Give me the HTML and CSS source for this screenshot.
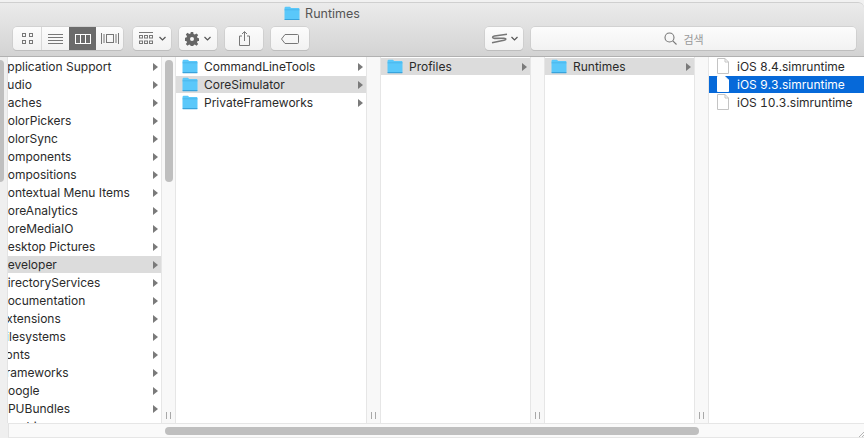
FILE: index.html
```html
<!DOCTYPE html>
<html lang="en">
<head>
  <meta charset="UTF-8">
  <meta name="viewport" content="width=device-width, initial-scale=1.0">
  <title>Runtimes</title>
  <link rel="stylesheet" href="styles.css">
</head>
<body>

<svg class="defs" width="0" height="0">
  <symbol id="folder" viewBox="0 0 16 14">
    <path d="M.5 2.2C.5 1.2 1 .7 2 .7h3.4c.7 0 1 .3 1.4 1 .2.3.4.4.8.4h6.6c.9 0 1.3.4 1.3 1.3v9c0 .9-.4 1.3-1.3 1.3H1.800c-.9 0-1.300-.4-1.300-1.300z" fill="#5ac8fa"/>
    <path d="M.5 3.800h15" stroke="#3fa9e0" stroke-width=".6" fill="none"/>
    <path d="M.5 13h15v.4c0 .5-.4.9-.9.9H1.400c-.5 0-.9-.4-.9-.9z" fill="#38a3dc"/>
  </symbol>
  <symbol id="doc" viewBox="0 0 14 16">
    <path class="doc-line" d="M1.500.5h7.500l3.500 3.500v11.500h-11z" fill="#fff"/>
    <path class="doc-line" d="M9 .5v3.500h3.500" fill="none"/>
  </symbol>
</svg>

<div class="window">
  <div class="toolbar">
    <div class="title">
      <svg class="title-icon"><use href="#folder"/></svg>
      <span>Runtimes</span>
    </div>
    <div class="tools">
      <div class="btn-group">
        <div class="seg seg-icons">
          <svg width="11" height="11" viewBox="0 0 11 11" fill="none" stroke="#777"><rect x=".5" y=".5" width="3" height="3"/><rect x="7.500" y=".5" width="3" height="3"/><rect x=".5" y="7.500" width="3" height="3"/><rect x="7.500" y="7.500" width="3" height="3"/></svg>
        </div>
        <div class="seg seg-list">
          <svg width="15" height="10" viewBox="0 0 15 10" stroke="#777"><path d="M0 .5h15M0 3.500h15M0 6.500h15M0 9.500h15"/></svg>
        </div>
        <div class="seg seg-columns">
          <svg width="16" height="10" viewBox="0 0 16 10" fill="none" stroke="#fff"><rect x=".5" y=".5" width="15" height="9"/><path d="M5.500 0v10M10.500 0v10"/></svg>
        </div>
        <div class="seg seg-flow">
          <svg width="18" height="11" viewBox="0 0 18 11" fill="none" stroke="#777"><rect x="5.500" y="1.500" width="7" height="8"/><path d="M.5 0v11M3 1v9M15 1v9M17.500 0v11"/></svg>
        </div>
      </div>
      <div class="btn btn-arrange">
        <svg width="15" height="13" viewBox="0 0 15 13" fill="none" stroke="#777"><path d="M0 .5h14"/><rect x=".5" y="3.500" width="3" height="2.500"/><rect x="5.500" y="3.500" width="3" height="2.500"/><rect x="10.500" y="3.500" width="3" height="2.500"/><rect x=".5" y="9" width="3" height="2.500"/><rect x="5.500" y="9" width="3" height="2.500"/><rect x="10.500" y="9" width="3" height="2.500"/></svg>
        <svg class="chev" width="7" height="5" viewBox="0 0 7 5"><path d="M.5 1l3 3 3-3" fill="none" stroke="#555" stroke-width="1.200"/></svg>
      </div>
      <div class="btn btn-action">
        <svg width="14" height="14" viewBox="0 0 14 14"><path d="M5.800 0h2.400l.3 2 1.300.6 1.700-1.200 1.700 1.700-1.200 1.700.6 1.300 2 .3v2.400l-2 .3-.6 1.300 1.200 1.700-1.700 1.700-1.700-1.200-1.300.6-.3 2H5.800l-.3-2-1.300-.6-1.700 1.200-1.700-1.700 1.200-1.700-.6-1.300-2-.3V5.800l2-.3.6-1.300-1.200-1.700 1.700-1.700 1.700 1.200 1.300-.6zM7 5a2 2 0 100 4 2 2 0 000-4z" fill="#666" fill-rule="evenodd"/></svg>
        <svg class="chev" width="7" height="5" viewBox="0 0 7 5"><path d="M.5 1l3 3 3-3" fill="none" stroke="#555" stroke-width="1.200"/></svg>
      </div>
      <div class="btn btn-share">
        <svg width="11" height="15" viewBox="0 0 11 15" fill="none" stroke="#777"><path d="M3 5H.5v9.500h10V5H8M5.500 10V.8M3 3L5.500 .6 8 3"/></svg>
      </div>
      <div class="btn btn-tag">
        <svg width="18" height="10" viewBox="0 0 18 10" fill="none" stroke="#777"><path d="M4 .5h12.500c.6 0 1 .4 1 1v7c0 .6-.4 1-1 1H4L.5 5z"/></svg>
      </div>
      <div class="btn btn-dropbox">
        <svg width="17" height="11" viewBox="0 0 17 11" fill="none" stroke="#777" stroke-width="1.600"><path d="M16 1.200L3.500 3C1 3.500 1 5.300 3.500 5.400L13 5.200C15.500 5.200 15.500 6.800 13 7.300L1 9.800"/></svg>
        <svg class="chev" width="7" height="5" viewBox="0 0 7 5"><path d="M.5 1l3 3 3-3" fill="none" stroke="#555" stroke-width="1.200"/></svg>
      </div>
      <div class="search">
        <svg width="13" height="13" viewBox="0 0 13 13" fill="none" stroke="#777" stroke-width="1.100"><circle cx="5.500" cy="5.500" r="4.500"/><path d="M8.800 8.800L12.500 12.500"/></svg>
        <span>검색</span>
      </div>
    </div>
  </div>

  <div class="browser">
    <div class="columns">
      <div class="edge"><div class="thumb-edge"></div></div>

      <div class="col col-lib">
        <div class="row"><span class="name">Application Support</span><i class="arrow"></i></div>
        <div class="row"><span class="name">Audio</span><i class="arrow"></i></div>
        <div class="row"><span class="name">Caches</span><i class="arrow"></i></div>
        <div class="row"><span class="name">ColorPickers</span><i class="arrow"></i></div>
        <div class="row"><span class="name">ColorSync</span><i class="arrow"></i></div>
        <div class="row"><span class="name">Components</span><i class="arrow"></i></div>
        <div class="row"><span class="name">Compositions</span><i class="arrow"></i></div>
        <div class="row"><span class="name">Contextual Menu Items</span><i class="arrow"></i></div>
        <div class="row"><span class="name">CoreAnalytics</span><i class="arrow"></i></div>
        <div class="row"><span class="name">CoreMediaIO</span><i class="arrow"></i></div>
        <div class="row"><span class="name">Desktop Pictures</span><i class="arrow"></i></div>
        <div class="row active"><span class="name">Developer</span><i class="arrow"></i></div>
        <div class="row"><span class="name">DirectoryServices</span><i class="arrow"></i></div>
        <div class="row"><span class="name">Documentation</span><i class="arrow"></i></div>
        <div class="row"><span class="name">Extensions</span><i class="arrow"></i></div>
        <div class="row"><span class="name">Filesystems</span><i class="arrow"></i></div>
        <div class="row"><span class="name">Fonts</span><i class="arrow"></i></div>
        <div class="row"><span class="name">Frameworks</span><i class="arrow"></i></div>
        <div class="row"><span class="name">Google</span><i class="arrow"></i></div>
        <div class="row"><span class="name">GPUBundles</span><i class="arrow"></i></div>
        <div class="row"><span class="name">Graphics</span><i class="arrow"></i></div>
      </div>
      <div class="divider"><div class="thumb"></div><span class="grip"></span></div>

      <div class="col col-dev">
        <div class="row"><svg class="icon"><use href="#folder"/></svg><span>CommandLineTools</span><i class="arrow"></i></div>
        <div class="row active"><svg class="icon"><use href="#folder"/></svg><span>CoreSimulator</span><i class="arrow"></i></div>
        <div class="row"><svg class="icon"><use href="#folder"/></svg><span>PrivateFrameworks</span><i class="arrow"></i></div>
      </div>
      <div class="divider"><span class="grip"></span></div>

      <div class="col col-mid">
        <div class="row active"><svg class="icon"><use href="#folder"/></svg><span>Profiles</span><i class="arrow"></i></div>
      </div>
      <div class="divider"><span class="grip"></span></div>

      <div class="col col-mid">
        <div class="row active"><svg class="icon"><use href="#folder"/></svg><span>Runtimes</span><i class="arrow"></i></div>
      </div>
      <div class="divider"><span class="grip"></span></div>

      <div class="col col-files">
        <div class="row"><svg class="icon"><use href="#doc"/></svg><span>iOS 8.4.simruntime</span></div>
        <div class="row selected"><svg class="icon"><use href="#doc"/></svg><span>iOS 9.3.simruntime</span></div>
        <div class="row"><svg class="icon"><use href="#doc"/></svg><span>iOS 10.3.simruntime</span></div>
      </div>
    </div>

    <div class="hscroll">
      <div class="hthumb"></div>
      <svg class="corner" width="5" height="5" viewBox="0 0 5 5" stroke="#b5b5b5"><path d="M0 5L5 0M3 5L5 3"/></svg>
    </div>
  </div>
</div>

</body>
</html>
```

FILE: styles.css
```css
html, body {
  margin: 0;
  padding: 0;
  height: 100%;
  overflow: hidden;
}
body {
  font-family: 'Inter', 'Noto Sans CJK KR', sans-serif;
  font-size: 12px;
  color: #2a2a2a;
  background-color: #f1f1f1;
}
.defs {
  display: block;
  height: 0;
}
.window {
  display: flex;
  flex-direction: column;
  height: 438px;
}

/* toolbar */
.toolbar {
  height: 55px;
  margin-top: 2px;
  box-sizing: border-box;
  border-top: 1px solid #cfcfcf;
  border-bottom: 1px solid #b1b1b1;
  border-radius: 0 6px 0 0;
  background: linear-gradient(#ebebeb, #d3d3d3);
}
.title {
  display: flex;
  align-items: center;
  justify-content: center;
  gap: 5px;
  height: 20px;
  padding-right: 220px;
  font-size: 12.5px;
  color: #555;
}
.title-icon {
  width: 16px;
  height: 14px;
}
.tools {
  display: flex;
  align-items: center;
  padding: 4px 8px 0 13px;
}
.btn-group, .btn, .search {
  display: flex;
  align-items: center;
  justify-content: center;
  height: 23px;
  box-sizing: border-box;
  background: linear-gradient(#fcfcfc, #f2f2f2);
  border-radius: 4px;
  box-shadow: 0 0 0 .5px #c4c4c4, 0 1px 0 #b8b8b8;
}
.btn-group {
  width: 110px;
  overflow: hidden;
}
.seg {
  display: flex;
  align-items: center;
  justify-content: center;
  height: 100%;
}
.seg-icons {
  width: 28px;
  border-right: 1px solid #d8d8d8;
}
.seg-list {
  width: 27px;
}
.seg-columns {
  width: 27px;
  background-color: #6b6b6b;
}
.seg-flow {
  width: 27px;
}
.btn {
  gap: 5px;
  width: 38px;
  margin-left: 8px;
}
.btn-arrange {
  margin-left: 10px;
}
.btn-dropbox {
  gap: 3px;
  margin-left: 176px;
}
.search {
  flex: 1;
  gap: 6px;
  margin-left: 8px;
  padding-right: 19px;
  color: #999;
  font-size: 11px;
}

/* columns */
.browser {
  flex: 1;
  display: flex;
  flex-direction: column;
  min-height: 0;
  background-color: #efefef;
}
.columns {
  flex: 1;
  display: flex;
  min-height: 0;
  overflow: hidden;
  background-color: #fff;
}
.edge {
  flex: none;
  width: 8px;
  box-sizing: border-box;
  background-color: #efefef;
  border-right: 1px solid #e3e3e3;
  padding-top: 3px;
}
.thumb-edge {
  width: 4px;
  height: 122px;
  background-color: #bfbfbf;
  border-radius: 0 4px 4px 0;
}
.col {
  flex: none;
  padding-top: 1px;
  overflow: hidden;
}
.col-lib {
  width: 153px;
}
.col-dev {
  width: 190px;
}
.col-mid {
  width: 149px;
}
.col-files {
  flex: 1;
  font-variant-numeric: tabular-nums;
}
.divider {
  position: relative;
  flex: none;
  width: 15px;
  box-sizing: border-box;
  background-color: #f8f8f8;
  border-left: 1px solid #e6e6e6;
  border-right: 1px solid #e6e6e6;
}
.thumb {
  position: absolute;
  top: 3px;
  left: 3px;
  width: 8px;
  height: 122px;
  background-color: #bfbfbf;
  border-radius: 4px;
}
.grip {
  position: absolute;
  bottom: 4px;
  left: 4px;
  width: 5px;
  height: 7px;
  box-sizing: border-box;
  border-left: 1px solid #a8a8a8;
  border-right: 1px solid #a8a8a8;
}
.row {
  display: flex;
  align-items: center;
  height: 17px;
  margin-bottom: 1px;
  padding-left: 6px;
  white-space: nowrap;
}
.col-lib .row {
  padding-left: 0;
}
.col-lib .name {
  margin-left: -9px;
}
.row span {
  flex: 1;
  min-width: 0;
}
.icon {
  flex: none;
  width: 16px;
  height: 16px;
  margin-right: 6px;
  margin-bottom: 1px;
}
.doc-line {
  stroke: var(--doc-line, #c4c4c4);
}
.arrow {
  flex: none;
  width: 0;
  height: 0;
  margin-right: 3px;
  border-left: 5px solid #7a7a7a;
  border-top: 4px solid transparent;
  border-bottom: 4px solid transparent;
}
.active {
  background-color: #dcdcdc;
}
.selected {
  --doc-line: #fff;
  background-color: #0669d9;
  color: #fff;
}

/* bottom scroller */
.hscroll {
  position: relative;
  flex: none;
  height: 15px;
  box-sizing: border-box;
  margin-left: 8px;
  padding-top: 3px;
  background-color: #fafafa;
  border-top: 1px solid #e6e6e6;
  border-bottom: 1px solid #e6e6e6;
  border-left: 1px solid #e3e3e3;
}
.hthumb {
  width: 534px;
  height: 8px;
  margin-left: 156px;
  background-color: #bfbfbf;
  border-radius: 4px;
}
.corner {
  position: absolute;
  right: 0;
  bottom: 0;
}
```
